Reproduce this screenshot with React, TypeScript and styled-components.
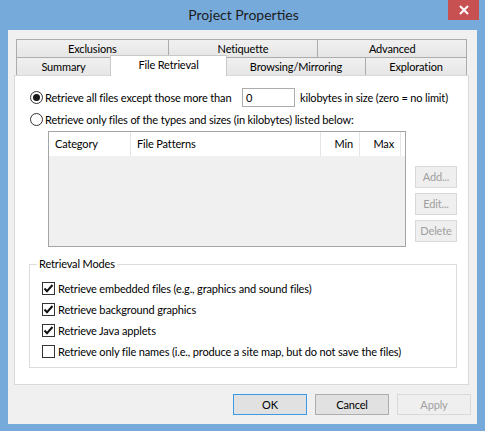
import React from "react";
import styled, { createGlobalStyle } from "styled-components";

const Global = createGlobalStyle`
  html, body { margin: 0; padding: 0; background: #76aadb; }
  body {
    font-family: "Segoe UI", Lato, "Liberation Sans", sans-serif;
    font-size: 11px;
    letter-spacing: -0.15px;
    color: #000;
  }
  * { box-sizing: border-box; }
`;

const Window = styled.div`
  width: 485px;
  height: 431px;
  background: #76aadb;
  display: flex;
  flex-direction: column;
  padding: 0 8px 7px 8px;
`;

const TitleBar = styled.div`
  height: 30px;
  flex: none;
  display: grid;
  grid-template-columns: 1fr auto 1fr;
  align-items: center;
  margin-right: -2px;
`;

const Title = styled.div`
  grid-column: 2;
  font-size: 14px;
  letter-spacing: 0;
  color: #1c1c1c;
  padding-bottom: 1px;
`;

const CloseButton = styled.div`
  grid-column: 3;
  justify-self: end;
  align-self: start;
  width: 31px;
  height: 20px;
  background: #c75050;
  display: flex;
  align-items: center;
  justify-content: center;
`;

const Client = styled.div`
  flex: 1;
  background: #f0f0f0;
  padding: 9px 8px 0 6px;
  display: flex;
  flex-direction: column;
`;

const TabStrip = styled.div`
  margin: 0 2px;
  display: flex;
  flex-direction: column;
`;

const TabRow = styled.div`
  display: flex;
  align-items: flex-start;
  height: 18px;
`;

const Tab = styled.div<{ $w: number; $first?: boolean; $active?: boolean }>`
  width: ${(p) => p.$w}px;
  height: ${(p) => (p.$active ? 21 : 18)}px;
  margin-left: ${(p) => (p.$first ? 0 : -1)}px;
  margin-top: ${(p) => (p.$active ? -2 : 0)}px;
  margin-bottom: ${(p) => (p.$active ? -1 : 0)}px;
  border: 1px solid ${(p) => (p.$active ? "#c9c9c9" : "#acacac")};
  border-bottom: none;
  background: ${(p) => (p.$active ? "#ffffff" : "linear-gradient(#f0f0f0, #e6e6e6)")};
  display: flex;
  align-items: center;
  justify-content: center;
  padding-bottom: ${(p) => (p.$active ? 3 : 0)}px;
  position: relative;
  z-index: ${(p) => (p.$active ? 2 : 1)};
  white-space: nowrap;
`;

const Panel = styled.div`
  width: 455px;
  height: 310px;
  background: #fff;
  border: 1px solid #d9d9d9;
  display: flex;
  flex-direction: column;
`;

const RadioRow = styled.div<{ $h: number; $mt: number }>`
  display: flex;
  align-items: center;
  height: ${(p) => p.$h}px;
  margin: ${(p) => p.$mt}px 0 0 15px;
  white-space: nowrap;
`;

const Radio = styled.span<{ $on?: boolean }>`
  width: 13px;
  height: 13px;
  border-radius: 50%;
  border: 1px solid #333;
  background: #fff;
  display: flex;
  align-items: center;
  justify-content: center;
  margin-right: 2px;
  flex: none;
  &::after {
    content: "";
    width: 7px;
    height: 7px;
    border-radius: 50%;
    background: ${(p) => (p.$on ? "#1a1a1a" : "transparent")};
  }
`;

const FixedLabel = styled.span<{ $w?: number }>`
  width: ${(p) => (p.$w ? `${p.$w}px` : "auto")};
  flex: none;
`;

const SizeInput = styled.div`
  width: 53px;
  height: 19px;
  border: 1px solid #acacac;
  background: #fff;
  padding: 0 0 0 3px;
  display: flex;
  align-items: center;
  margin-right: 5px;
`;

const ListRow = styled.div`
  display: flex;
  margin: 4px 0 0 33px;
  align-items: flex-start;
`;

const ListView = styled.div`
  width: 358px;
  height: 116px;
  border: 1px solid #a5a5a5;
  background: #f0f0f0;
  display: flex;
  flex-direction: column;
`;

const Header = styled.div`
  height: 25px;
  background: #fff;
  display: flex;
  border-bottom: 1px solid #eef2f7;
`;

const HeaderCell = styled.div<{ $w: number; $right?: boolean }>`
  width: ${(p) => p.$w}px;
  flex: none;
  border-right: 1px solid #e5e5e5;
  display: flex;
  align-items: center;
  justify-content: ${(p) => (p.$right ? "flex-end" : "flex-start")};
  padding: 0 6px 1px 6px;
`;

const SideButtons = styled.div`
  display: flex;
  flex-direction: column;
  gap: 5px;
  margin: 35px 0 0 9px;
`;

const Button = styled.div<{ $w: number; $h: number; $disabled?: boolean; $default?: boolean }>`
  width: ${(p) => p.$w}px;
  height: ${(p) => p.$h}px;
  border: 1px solid
    ${(p) => (p.$disabled ? "#d9d9d9" : p.$default ? "#3c99e6" : "#adadad")};
  background: ${(p) => (p.$disabled ? "#efefef" : "#e1e1e1")};
  color: ${(p) => (p.$disabled ? "#a0a0a0" : "#000")};
  display: flex;
  align-items: center;
  justify-content: center;
  padding-bottom: 1px;
`;

const GroupBox = styled.fieldset`
  width: 428px;
  margin: 10px 0 0 14px;
  border: 1px solid #dcdcdc;
  padding: 7px 0 5px 7px;
  min-width: 0;
`;

const Legend = styled.legend`
  padding: 0 2px;
  line-height: 14px;
  font-size: 11px;
`;

const CheckRow = styled.div`
  display: flex;
  align-items: center;
  height: 21px;
  margin-left: 5px;
  white-space: nowrap;
`;

const CheckBox = styled.span`
  width: 13px;
  height: 13px;
  border: 1px solid #333;
  background: #fff;
  margin-right: 3px;
  flex: none;
  display: flex;
  align-items: center;
  justify-content: center;
`;

const Footer = styled.div`
  display: flex;
  justify-content: flex-end;
  gap: 8px;
  margin: 9px -2px 0 0;
`;

const CheckMark = () => (
  <svg width="11" height="11" viewBox="0 0 11 11">
    <polyline points="1.5,5.5 4,8.2 9.5,2" fill="none" stroke="#111" strokeWidth="2" />
  </svg>
);

const checks: { label: string; on: boolean }[] = [
  { label: "Retrieve embedded files (e.g., graphics and sound files)", on: true },
  { label: "Retrieve background graphics", on: true },
  { label: "Retrieve Java applets", on: true },
  { label: "Retrieve only file names (i.e., produce a site map, but do not save the files)", on: false },
];

export default function App() {
  return (
    <>
      <Global />
      <Window>
        <TitleBar>
          <Title>Project Properties</Title>
          <CloseButton>
            <svg width="10" height="10" viewBox="0 0 10 10">
              <path d="M1 1 L9 9 M9 1 L1 9" stroke="#fff" strokeWidth="2" />
            </svg>
          </CloseButton>
        </TitleBar>
        <Client>
          <TabStrip>
            <TabRow>
              <Tab $w={153} $first>Exclusions</Tab>
              <Tab $w={151}>Netiquette</Tab>
              <Tab $w={150}>Advanced</Tab>
            </TabRow>
            <TabRow>
              <Tab $w={95} $first>Summary</Tab>
              <Tab $w={117} $active>File Retrieval</Tab>
              <Tab $w={140}>Browsing/Mirroring</Tab>
              <Tab $w={102}>Exploration</Tab>
            </TabRow>
          </TabStrip>
          <Panel>
            <RadioRow $h={19} $mt={12}>
              <Radio $on />
              <FixedLabel $w={197}>Retrieve all files except those more than</FixedLabel>
              <SizeInput>0</SizeInput>
              <FixedLabel>kilobytes in size (zero = no limit)</FixedLabel>
            </RadioRow>
            <RadioRow $h={16} $mt={4}>
              <Radio />
              <FixedLabel>Retrieve only files of the types and sizes (in kilobytes) listed below:</FixedLabel>
            </RadioRow>
            <ListRow>
              <ListView>
                <Header>
                  <HeaderCell $w={82}>Category</HeaderCell>
                  <HeaderCell $w={190}>File Patterns</HeaderCell>
                  <HeaderCell $w={39} $right>Min</HeaderCell>
                  <HeaderCell $w={41} $right>Max</HeaderCell>
                </Header>
              </ListView>
              <SideButtons>
                <Button $w={42} $h={22} $disabled>Add...</Button>
                <Button $w={42} $h={22} $disabled>Edit...</Button>
                <Button $w={42} $h={22} $disabled>Delete</Button>
              </SideButtons>
            </ListRow>
            <GroupBox>
              <Legend>Retrieval Modes</Legend>
              {checks.map((c) => (
                <CheckRow key={c.label}>
                  <CheckBox>{c.on && <CheckMark />}</CheckBox>
                  {c.label}
                </CheckRow>
              ))}
            </GroupBox>
          </Panel>
          <Footer>
            <Button $w={74} $h={21} $default>OK</Button>
            <Button $w={74} $h={21}>Cancel</Button>
            <Button $w={74} $h={21} $disabled>Apply</Button>
          </Footer>
        </Client>
      </Window>
    </>
  );
}
